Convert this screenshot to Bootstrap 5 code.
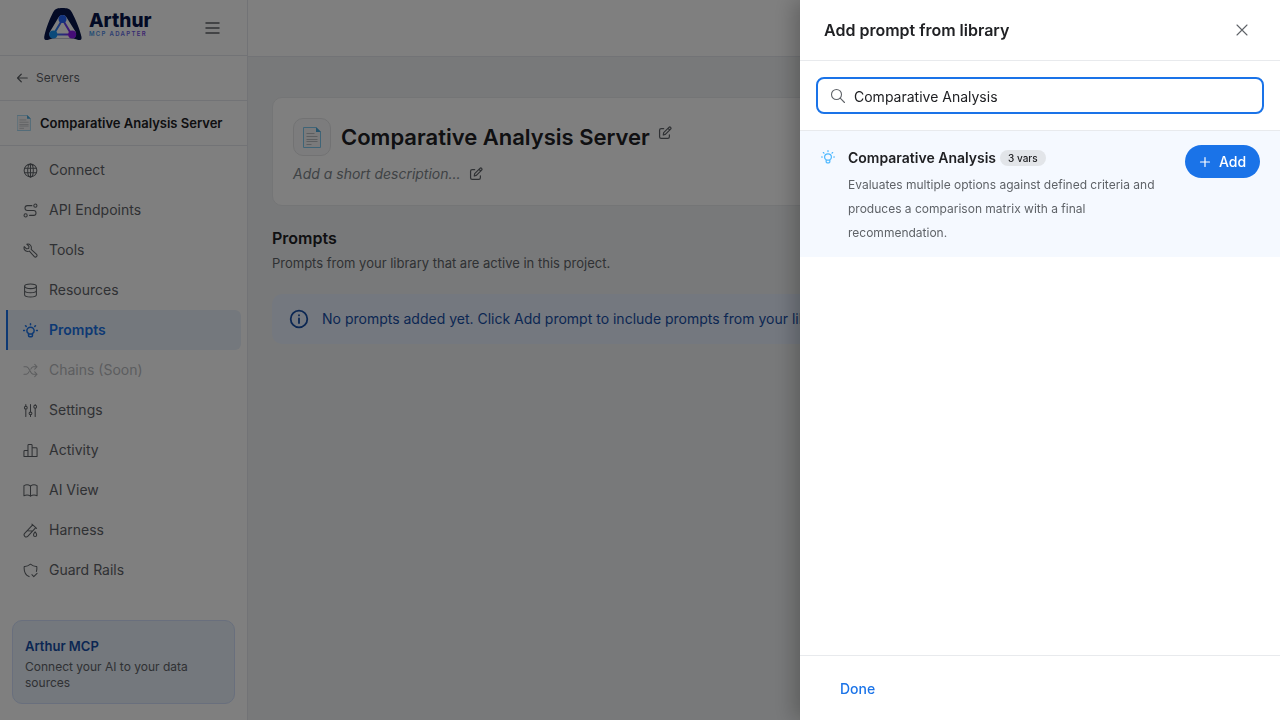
<!DOCTYPE html>
<html lang="en">
<head>
<meta charset="utf-8">
<meta name="viewport" content="width=device-width, initial-scale=1">
<title>Comparative Analysis Server – Prompts</title>
<link href="https://cdn.jsdelivr.net/npm/bootstrap@5.3.0/dist/css/bootstrap.min.css" rel="stylesheet">
<style>
  :root { --line: #e8eaed; --ink: #202124; --muted: #5f6368; --brand: #1a73e8; --navy: #174ea6; }
  body { font-family: Inter, "Open Sans", sans-serif; font-size: 14px; line-height: 20px; color: var(--ink); background: #f1f3f4; }
  .icon { width: 16px; height: 16px; flex: none; fill: none; stroke: currentColor; stroke-width: 1.1; stroke-linecap: round; stroke-linejoin: round; }
  .icon-sm { width: 14px; height: 14px; stroke-width: 1.4; }
  .icon-xs { width: 12px; height: 12px; stroke-width: 1.6; }
  .icon-lg { width: 22px; height: 22px; stroke-width: 1.8; }
  .text-soft { color: var(--muted); }
  .bare { border: 0; background: none; padding: 0; line-height: 0; color: var(--muted); }

  .sidebar { width: 248px; background: #fff; border-right: 1px solid #e4e7ec; }
  .side-row { border-bottom: 1px solid #e4e7ec; padding: 0 16px; flex: none; }
  .brand-row { height: 56px; padding: 0 27px 0 42px; }
  .brand-logo { width: 114px; height: 36px; margin-bottom: 8px; }
  .link-row { height: 45px; font-size: 13px; }
  .link-row.back { font-size: 12px; }
  .side-nav { padding: 4px 6px 0; }
  .side-nav .nav-link { display: flex; align-items: center; gap: 11px; height: 40px; padding: 0 15px; color: var(--muted); border-left: 2px solid transparent; border-radius: 0 6px 6px 0; }
  .side-nav .icon { width: 15px; height: 15px; }
  .side-nav .nav-link.active { color: var(--brand); background: #e8f0fa; border-color: var(--brand); font-weight: 600; }
  .side-nav .nav-link.active .icon { stroke-width: 1.6; }
  .side-nav .nav-link.disabled { color: #b9bbbe; }
  .promo { margin: auto 12px 16px; padding: 16px 12px 12px; border: 1px solid #d2dffa; border-radius: 10px; background: #e8f0fa; font-size: 12px; line-height: 16px; }
  .promo h2 { font-size: 13px; line-height: 18px; margin: 0 0 4px; font-weight: 600; color: var(--navy); }

  .topbar { height: 57px; border-bottom: 1px solid #e4e7ec; background: #fff; }
  .content { padding: 40px 24px; }
  .server-card { background: #fff; border: 1px solid #e8eaed; border-radius: 10px; padding: 20px; height: 109px; }
  .server-icon { width: 38px; height: 38px; border: 1px solid #e4e5e7; border-radius: 10px; background: #f8f9fa; }
  .server-card h1 { font-size: 22px; line-height: 30px; font-weight: 600; margin: 0; padding-left: 10px; }
  .server-card em { color: #80868b; }
  .section-title { font-size: 16px; line-height: 24px; font-weight: 600; margin: 20px 0 2px; }
  .section-note { font-size: 13px; line-height: 22px; margin: 0; }
  .notice { background: #e8f0fe; color: var(--navy); border: 0; border-radius: 10px; padding: 12px 16px; margin: 20px 0 0; height: 50px; gap: 12px; }

  .shade { background: #000; opacity: .5; }
  .library.offcanvas { --bs-offcanvas-width: 480px; border: 0; background: #fff; color: var(--ink); box-shadow: -6px 0 20px rgba(0,0,0,.24); }
  .library .offcanvas-header { height: 61px; padding: 0 24px; border-bottom: 1px solid var(--line); }
  .library .offcanvas-title { font-size: 16px; line-height: 24px; font-weight: 600; }
  .close-btn { padding: 6px; }
  .search-area { padding: 16px; height: 70px; border-bottom: 1px solid var(--line); }
  .search-box { height: 37px; border: 2px solid var(--brand); border-radius: 8px; padding: 0 12px; gap: 8px; }
  .search-box input { font-size: 14px; line-height: 20px; padding: 2px 0 0; border: 0; color: var(--ink); }
  .search-box input:focus { box-shadow: none; }
  .result { background: #f5f9ff; padding: 14px 20px 12px; gap: 13px; }
  .result h3 { font-size: 14px; line-height: 26px; font-weight: 600; margin: 0; }
  .result p { font-size: 12px; line-height: 24px; margin: 2px 0 0; max-width: 325px; }
  .result-icon { color: #4db8ff; margin: 5px 0 0 1px; }
  .vars { font-size: 10px; line-height: 16px; font-weight: 500; padding: 0 8px; margin-left: 4px; border-radius: 8px; background: #e2e5e9; }
  .add-btn { height: 33px; width: 75px; padding: 0; font-size: 14px; line-height: 20px; font-weight: 500; gap: 8px; border-radius: 17px; background: var(--brand); color: #fff; }
  .add-btn:hover { background: #1765cc; color: #fff; }
  .drawer-foot { height: 65px; padding: 2px 24px 0; border-top: 1px solid var(--line); }
  .done-btn { font-size: 14px; line-height: 20px; font-weight: 500; padding: 6px 16px; color: var(--brand); border: 0; }
</style>
</head>
<body>
<svg class="d-none" aria-hidden="true">
  <symbol id="bulb" viewBox="0 0 16 16"><path d="M5.900 11.200C4.700 10.500 4.100 9.500 4.100 8.300a3.900 3.900 0 0 1 7.800 0c0 1.200-.6 2.200-1.800 2.900v2.100c0 .8-.5 1.300-1.200 1.300H7.100c-.7 0-1.200-.5-1.200-1.300zM6 11.600h4M8 .8v1M2.700 2.900l.7.7M13.300 2.900l-.7.7M.6 8h1M14.400 8h1"/></symbol>
  <symbol id="pencil" viewBox="0 0 16 16"><path d="M6.500 3H3.600C2.500 3 1.800 3.700 1.800 4.800v7.600c0 1.100.7 1.800 1.800 1.800h7.600c1.100 0 1.800-.7 1.800-1.800V10M6 10.300l.5-2.700 6-6a1.300 1.300 0 0 1 1.900 1.900l-6 6zM11.500 2.700l1.900 1.900"/></symbol>
  <symbol id="page" viewBox="0 0 18 21"><path fill="#f4f5f6" stroke="#7ec8ee" stroke-width="1" d="M.5.5h12.500l4.500 4.500v15.500H.5z"/><path fill="#4aa9dc" stroke="none" d="M13 0l5 5h-5z"/><path stroke="#b9bcc0" stroke-width="1" d="M3.500 6.500h8M3.500 9.500h11M3.500 12.500h11M3.500 14.500h11M3.500 17.500h5"/></symbol>
</svg>

<div class="d-flex min-vh-100">
  <aside class="sidebar d-flex flex-column flex-shrink-0">
    <div class="side-row brand-row d-flex align-items-center justify-content-between">
      <svg class="brand-logo" viewBox="0 0 114 36" role="img" aria-label="Arthur MCP Adapter">
        <defs><linearGradient id="tri"><stop offset="0" stop-color="#1495f5"/><stop offset="1" stop-color="#8a18ee"/></linearGradient><linearGradient id="tag" x1="0" x2="1"><stop offset="0" stop-color="#3d9be8"/><stop offset="1" stop-color="#7a45df"/></linearGradient></defs>
        <path fill="#06144a" d="M2.200 31C3 25 8 12 11 6.500 13 2.500 16 2 20.500 2s7.500.5 9.500 4.500C33 12 38.500 25 39.500 31c.5 3-1.500 3.500-4 2.800-2-.6-3-1.200-5-1.200h-19c-2 0-3 .6-5 1.200-2.600.7-4.600.2-4.300-2.800z"/>
        <path fill="none" stroke="#fff" stroke-width="9" stroke-linejoin="round" d="M20.500 13.500L11.800 28h17.800z"/>
        <path fill="#fff" stroke="url(#tri)" stroke-width="2" d="M20.500 13.500L11.500 28.500h18z"/>
        <circle cx="20.500" cy="13" r="4" fill="#2467ff"/><circle cx="11.300" cy="28.500" r="4" fill="#1495f5"/><circle cx="30.200" cy="28.500" r="4" fill="#8a18ee"/>
        <text x="47" y="21" font-family="Inter, sans-serif" font-size="19" font-weight="800" fill="#06144a">Arthur</text>
        <text x="47" y="30" font-family="Inter, sans-serif" font-size="6" font-weight="600" letter-spacing="1.300" fill="url(#tag)">MCP ADAPTER</text>
      </svg>
      <button class="bare" type="button" aria-label="Toggle menu"><svg class="icon" viewBox="0 0 16 16"><path stroke-width="1.500" d="M2 3h13M2 8h13M2 13h13"/></svg></button>
    </div>
    <a href="#" class="side-row link-row back d-flex align-items-center text-decoration-none text-soft gap-2">
      <svg class="icon icon-xs" viewBox="0 0 16 16"><path d="M15 8H2M7 3L2 8l5 5"/></svg>Servers</a>
    <div class="side-row link-row d-flex align-items-center gap-2 fw-semibold">
      <svg class="icon" viewBox="0 0 18 21"><use href="#page"/></svg>Comparative Analysis Server</div>
    <nav class="nav flex-column side-nav">
      <a class="nav-link" href="#"><svg class="icon" viewBox="0 0 16 16"><circle cx="8" cy="8" r="6.800"/><ellipse cx="8" cy="8" rx="3" ry="6.800"/><path d="M8 1.200v13.600M1.800 5.500h12.400M1.800 10.500h12.400"/></svg>Connect</a>
      <a class="nav-link" href="#"><svg class="icon" viewBox="0 0 16 16"><circle cx="13.200" cy="2.800" r="1.700"/><circle cx="2.800" cy="13.200" r="1.700"/><path d="M9.500 2.800H4.700a2.600 2.600 0 0 0 0 5.200h6.600a2.600 2.600 0 0 1 0 5.200H7"/></svg>API Endpoints</a>
      <a class="nav-link" href="#"><svg class="icon" viewBox="0 0 16 16"><path d="M4 1.200l2.400 2.400-.3 2.200-2.300.4L1.300 3.800C.5 6.300 2 9 5 9c.7 0 1.200-.2 1.800-.4l5.300 6c1.500 1.400 3.800-.8 2.400-2.400L8.700 6.700C9.700 3.500 7.300.2 4 1.200z"/></svg>Tools</a>
      <a class="nav-link" href="#"><svg class="icon" viewBox="0 0 16 16"><ellipse cx="8" cy="3.500" rx="6.300" ry="2.500"/><path d="M1.700 3.500v9c0 1.400 2.800 2.400 6.300 2.400s6.300-1 6.300-2.400v-9M1.700 8c0 1.400 2.800 2.400 6.300 2.400s6.300-1 6.300-2.400"/></svg>Resources</a>
      <a class="nav-link active" href="#" aria-current="page"><svg class="icon"><use href="#bulb"/></svg>Prompts</a>
      <a class="nav-link disabled" aria-disabled="true"><svg class="icon" viewBox="0 0 16 16"><path d="M1 4h2.500c3.500 0 4 8 7.500 8h4M1 12h2.500c1.500 0 2.300-1.300 3-2.800M8.300 6.500C9 5 9.700 4 11 4h4M12.500 1.500L15 4l-2.500 2.500M12.500 9.500L15 12l-2.500 2.500"/></svg>Chains (Soon)</a>
      <a class="nav-link" href="#"><svg class="icon" viewBox="0 0 16 16"><circle cx="3" cy="5" r="1.500"/><circle cx="8" cy="11" r="1.500"/><circle cx="13" cy="4" r="1.500"/><path d="M3 1.500v2M3 6.500v8M8 1.500v8M8 12.500v2M13 1.500v1M13 5.500v9"/></svg>Settings</a>
      <a class="nav-link" href="#"><svg class="icon" viewBox="0 0 16 16"><path d="M1 14V9q0-1 1-1h3.300v6.500H1.500Q1 14.500 1 14zM5.300 14.500v-12q0-1 1-1h2.400q1 0 1 1v12zM9.700 14.500V5H14q1 0 1 1v8q0 .5-.5.5z"/></svg>Activity</a>
      <a class="nav-link" href="#"><svg class="icon" viewBox="0 0 16 16"><path d="M8 3.300C6 1.800 3 1.800 1 2.800v10.800c2-1 5-1 7 .4 2-1.400 5-1.400 7-.4V2.800c-2-1-5-1-7 .5zM8 3.300V14"/></svg>AI View</a>
      <a class="nav-link" href="#"><svg class="icon" viewBox="0 0 16 16"><path d="M9.500 1.200l5 4.500M10.300 2L2 10.700c-2.400 2.600 1 5.700 3.300 3.300l8.300-9M5 8.300l5 .2M12.900 9.500s-1.700 2-1.700 3.200a1.700 1.700 0 0 0 3.400 0c0-1.200-1.700-3.200-1.700-3.200z"/></svg>Harness</a>
      <a class="nav-link" href="#"><svg class="icon" viewBox="0 0 16 16"><path d="M6.500 14.500C2.500 12.800.8 9 1.300 3.800 4 4 6 3 8 1.300c2 1.700 4 2.700 6.700 2.500.2 2 .1 3.700-.4 5.200M9.500 12.500l2 2 3.500-3.500"/></svg>Guard Rails</a>
    </nav>
    <div class="promo text-soft"><h2>Arthur MCP</h2>Connect your AI to your data sources</div>
  </aside>

  <div class="flex-grow-1">
    <header class="topbar"></header>
    <main class="content">
      <section class="server-card">
        <div class="d-flex align-items-center">
          <div class="server-icon d-flex align-items-center justify-content-center"><svg width="18" height="21" fill="none"><use href="#page"/></svg></div>
          <h1>Comparative Analysis Server</h1>
          <button class="bare ms-2 mb-2" type="button" aria-label="Edit name"><svg class="icon icon-sm"><use href="#pencil"/></svg></button>
        </div>
        <div class="d-flex align-items-center mt-1 pt-1">
          <em>Add a short description...</em>
          <button class="bare ms-2" type="button" aria-label="Edit description"><svg class="icon icon-sm"><use href="#pencil"/></svg></button>
        </div>
      </section>
      <h2 class="section-title">Prompts</h2>
      <p class="section-note text-soft">Prompts from your library that are active in this project.</p>
      <div class="alert notice d-flex align-items-center text-nowrap overflow-hidden" role="status">
        <svg class="icon icon-lg" viewBox="0 0 22 22"><circle cx="11" cy="11" r="8.300"/><path d="M11 10.500V15M11 7.200v.2"/></svg>
        <span>No prompts added yet. Click Add prompt to include prompts from your library.</span>
      </div>
    </main>
  </div>
</div>

<div class="offcanvas-backdrop shade"></div>
<div class="offcanvas offcanvas-end show library" data-bs-backdrop="false" data-bs-scroll="true" tabindex="-1" role="dialog" aria-modal="true" aria-labelledby="libTitle">
  <div class="offcanvas-header">
    <h2 class="offcanvas-title" id="libTitle">Add prompt from library</h2>
    <button class="bare close-btn" type="button" data-bs-dismiss="offcanvas" aria-label="Close"><svg class="icon" viewBox="0 0 16 16"><path d="M3 3l10 10M13 3L3 13"/></svg></button>
  </div>
  <div class="search-area">
    <div class="search-box d-flex align-items-center text-soft">
      <svg class="icon" viewBox="0 0 16 16"><circle cx="6.500" cy="6.500" r="5"/><path d="M10.200 10.200l4.300 4.300"/></svg>
      <input class="form-control" type="text" aria-label="Search prompts" value="Comparative Analysis">
    </div>
  </div>
  <div class="offcanvas-body p-0">
    <div class="result d-flex align-items-start">
      <svg class="icon icon-sm result-icon"><use href="#bulb"/></svg>
      <div class="flex-grow-1">
        <div class="d-flex align-items-center"><h3>Comparative Analysis</h3><span class="vars">3 vars</span></div>
        <p class="text-soft">Evaluates multiple options against defined criteria and produces a comparison matrix with a final recommendation.</p>
      </div>
      <button class="btn add-btn d-flex align-items-center justify-content-center flex-shrink-0" type="button"><svg class="icon icon-xs" viewBox="0 0 16 16"><path d="M8 2v12M2 8h12"/></svg>Add</button>
    </div>
  </div>
  <div class="drawer-foot d-flex align-items-center"><button class="btn done-btn" type="button">Done</button></div>
</div>
<script src="https://cdn.jsdelivr.net/npm/bootstrap@5.3.0/dist/js/bootstrap.bundle.min.js"></script>
</body>
</html>
